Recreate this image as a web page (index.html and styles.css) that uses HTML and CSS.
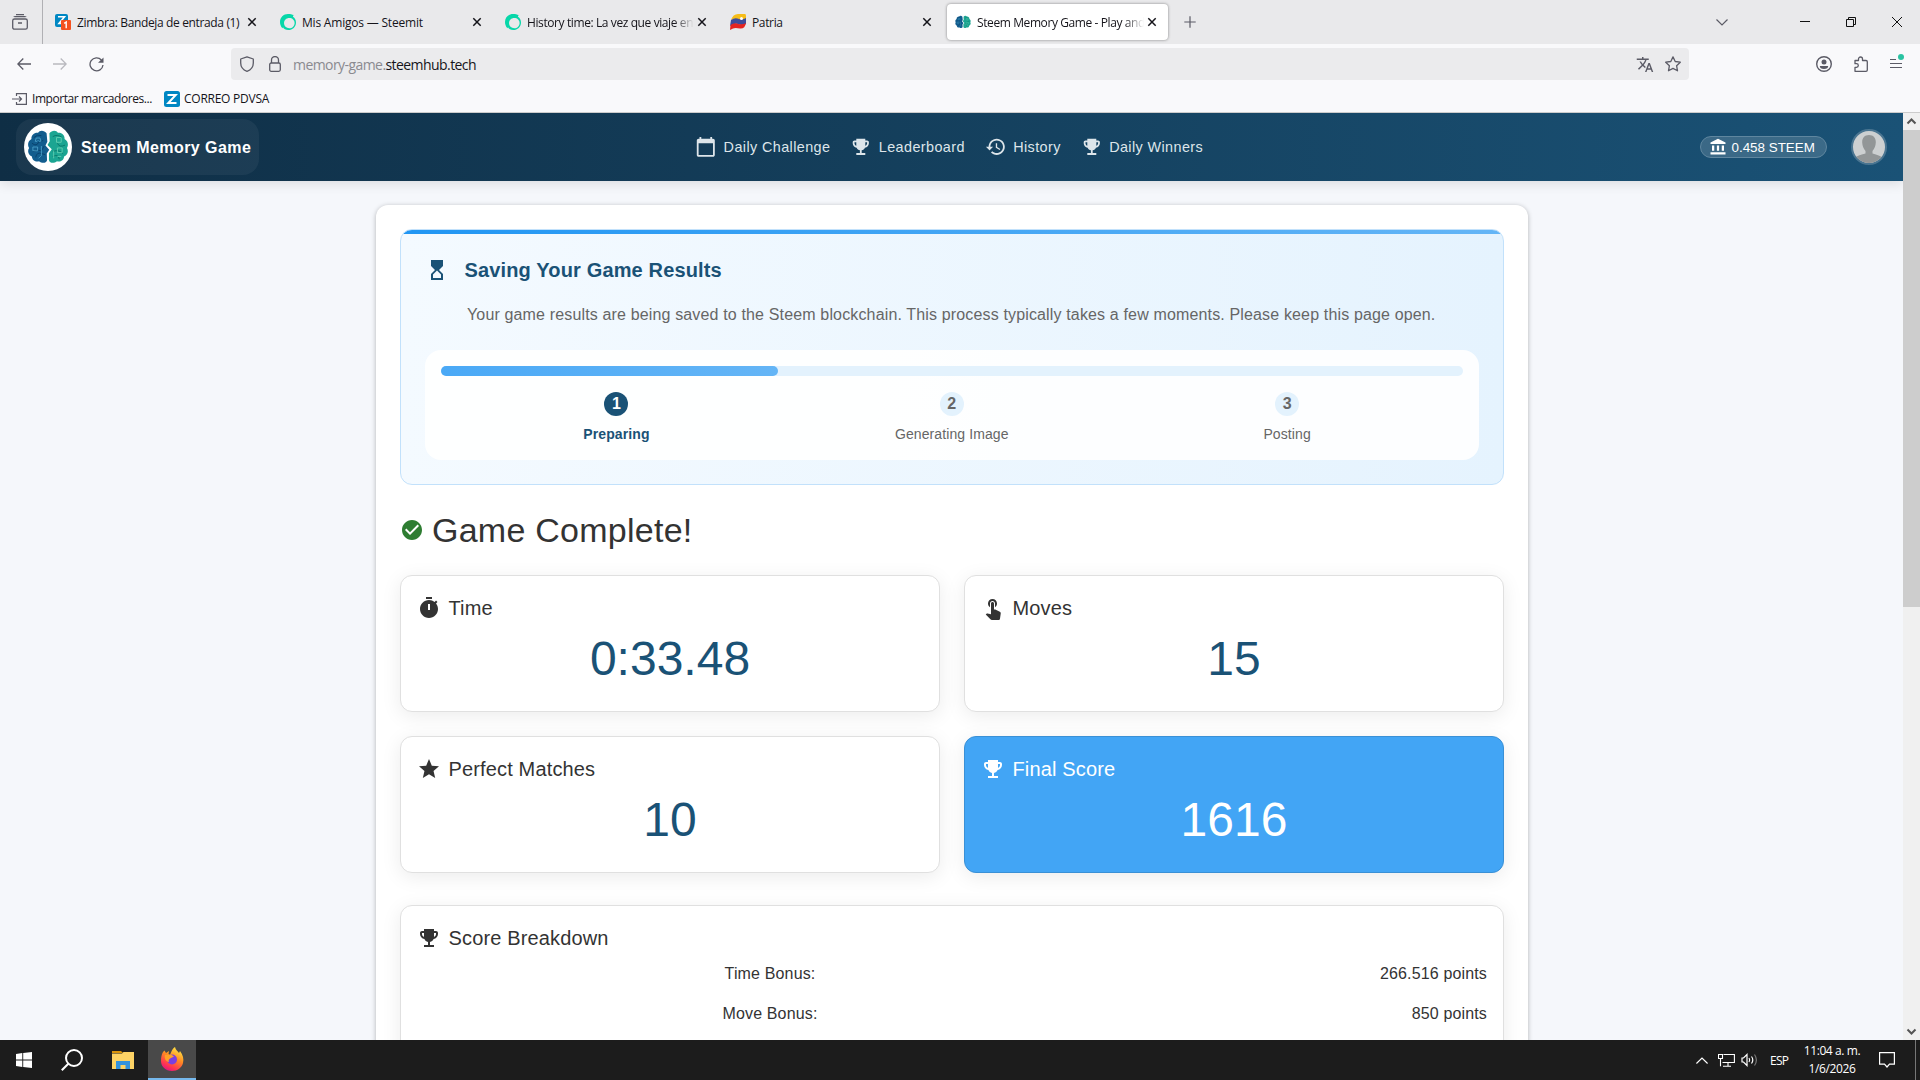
FILE: index.html
```html
<!DOCTYPE html>
<html lang="es">
<head>
<meta charset="utf-8">
<title>Steem Memory Game</title>
<link rel="stylesheet" href="styles.css">
</head>
<body>
<svg class="defs" aria-hidden="true">
  <symbol id="x" viewBox="0 0 16 16"><path d="M4.3 4.3l7.4 7.4M11.7 4.3l-7.4 7.4" fill="none" stroke="currentColor" stroke-width="1.5"/></symbol>
  <symbol id="trophy" viewBox="0 0 24 24"><path d="M19 5h-2V3H7v2H5c-1.1 0-2 .9-2 2v1c0 2.55 1.92 4.63 4.39 4.94.63 1.5 1.98 2.63 3.61 2.96V19H7v2h10v-2h-4v-3.1c1.63-.33 2.98-1.46 3.61-2.96C19.08 12.63 21 10.55 21 8V7c0-1.1-.9-2-2-2zM5 8V7h2v3.82C5.84 10.4 5 9.3 5 8zm14 0c0 1.3-.84 2.4-2 2.82V7h2v1z"/></symbol>
  <symbol id="steem" viewBox="0 0 16 16"><path fill="#07d7a9" d="M8 0C10.500 0 12 .4 13.600 1.100L12.900 2.700C15 4 16 6 16 8.400 16 12.700 12.600 16 8.300 16 5.600 16 3.900 15 3 13.300L2.500 14.300C.8 12.500 0 10.400 0 8 0 3.500 3.500 0 8 0z"/><path fill="#e9e9eb" d="M9.300 3.900c3 0 5.300 2.100 5.300 5s-2.300 5.300-5.300 5.300-5.300-2.300-5.300-5.200 2.200-5.100 5.300-5.100z"/></symbol>
  <symbol id="brain" viewBox="0 0 44 36">
    <path fill="#125d8e" d="M20.500 3.500C18 0 13 0 11.500 3 7 2.500 4 6 4.500 9.500 0 12 .5 17 2 19-.5 23 2 27 5 28c0 4 4 6 7.500 5 3 2.500 7.500 2.500 8.500-1l-.3-7 2.600-4-4-4.500 2-4z"/>
    <path fill="#1ba592" d="M23.500 3.500C26 0 31 0 32.500 3 37 2.500 40 6 39.500 9.500 44 12 43.500 17 42 19c2.500 4 0 8-3 9 0 4-4 6-7.500 5-3 2.500-7.500 2.500-8.500-1V24.500l3-4-4.500-4.500 2.300-4z"/>
    <g fill="none" stroke="#073f68" stroke-width=".9"><path d="M7 8q4-4 8-2M5 14q5 4 7-1l5-2M6 23q5-3 9-1l3-5M9 29q1-6 6-4l4 1"/></g>
    <g fill="none" stroke="#087164" stroke-width=".9"><path d="M37 8q-5-4-10-1M40 16q-6 3-8-2M38 25q-5-5-11-2M34 31q-1-6-7-3"/></g>
    <g fill="none" stroke="#4ba3ca" stroke-width=".9"><path d="M8.500 12l1-3.500h4l1 3.500h-2l-1-1-1 1zM6 18h5v4H6zM15 17v10l-3 3"/></g>
    <g fill="none" stroke="#66d1b2" stroke-width=".9"><path d="M31 8h5v5h-5zM32 19h5v5h-5zM28 22v8M32 28h4"/></g>
  </symbol>
</svg>

<div class="tabs">
  <div class="firefox-view"><svg width="16" height="16" viewBox="0 0 16 16" fill="none" stroke="#5b5b66" stroke-width="1.300"><rect x=".7" y="5" width="14.600" height="10.200" rx="1.800"/><path d="M2 2.700Q2 2.600 3 2.600h10q1 0 1 .1M4 .6h8M6 9h4"/></svg></div>
  <div class="tab"><svg width="16" height="16" viewBox="0 0 16 16"><rect width="13" height="13" rx="2" fill="#0087c3"/><path d="M3 2.800h6.500L4 9.500h4" fill="none" stroke="#fff" stroke-width="1.600"/><rect x="6" y="6" width="10" height="10" rx="1" fill="#f4511e"/><path d="M9.200 9.300l2-1.300v6.200" fill="none" stroke="#fff" stroke-width="1.400"/></svg><span class="tab-title">Zimbra: Bandeja de entrada (1)</span><svg class="close"><use href="#x"/></svg></div>
  <div class="tab"><svg width="16" height="16"><use href="#steem"/></svg><span class="tab-title wide">Mis Amigos — Steemit</span><svg class="close"><use href="#x"/></svg></div>
  <div class="tab"><svg width="16" height="16"><use href="#steem"/></svg><span class="tab-title fade">History time: La vez que viaje en</span><svg class="close"><use href="#x"/></svg></div>
  <div class="tab"><svg width="16" height="16" viewBox="0 0 16 16"><path fill="#f6bd19" d="M1 6Q3 0 8 0h7q1 0 1 2v4Q12 8 8 6 4 4 1 6z"/><path fill="#3e4c9c" d="M1 6q4-3 8-1 4 1 7-1v6q-5 2-8 0-4-1-8 2z"/><path fill="#e52421" d="M.5 11q4-3 8-1 4 1 7.500-1-1 6-6 5.500-5-1-7 0L0 16z"/><circle cx="11.500" cy="4.500" r="1.500" fill="#fff"/></svg><span class="tab-title">Patria</span><svg class="close"><use href="#x"/></svg></div>
  <div class="tab active"><svg width="16" height="16"><use href="#brain"/></svg><span class="tab-title fade">Steem Memory Game - Play and</span><svg class="close"><use href="#x"/></svg></div>
  <svg class="plus" width="12" height="12" viewBox="0 0 12 12" stroke="#5b5b66" stroke-width="1.200"><path d="M6 .3v11.400M.3 6h11.400"/></svg>
  <div class="window-controls">
    <svg width="12" height="7" viewBox="0 0 12 7" fill="none" stroke="#5b5b66" stroke-width="1.200"><path d="M.5.500L6 6l5.500-5.500"/></svg>
    <svg width="10" height="10" viewBox="0 0 10 10"><path d="M0 4.500h10" stroke="#111"/></svg>
    <svg width="10" height="10" viewBox="0 0 10 10" fill="none" stroke="#111"><path d="M.5 2.500h7v7h-7zM2.500 2.500v-2h7v7h-2"/></svg>
    <svg width="10" height="10" viewBox="0 0 10 10" stroke="#111"><path d="M0 0l10 10M10 0L0 10"/></svg>
  </div>
</div>

<div class="toolbar">
  <div class="nav-buttons">
    <svg width="14" height="12" viewBox="0 0 14 12" fill="none" stroke="#5b5b66" stroke-width="1.300"><path d="M14 6H1M6.300.500L.8 6l5.500 5.500"/></svg>
    <svg width="14" height="12" viewBox="0 0 14 12" fill="none" stroke="#b9b9bf" stroke-width="1.300"><path d="M0 6h13M7.700.500L13.200 6l-5.500 5.500"/></svg>
    <svg width="15" height="15" viewBox="0 0 15 15"><path d="M12.400 3A6.500 6.500 0 1 0 14 8" fill="none" stroke="#5b5b66" stroke-width="1.300"/><path d="M14.500.500v5.300H9z" fill="#5b5b66"/></svg>
  </div>
  <div class="urlbar">
    <svg width="16" height="16" viewBox="0 0 16 16" fill="none" stroke="#5b5b66" stroke-width="1.300"><path d="M8 .8L14.300 3v4c0 4-2.800 7-6.300 8.300C4.500 14 1.700 11 1.700 7V3z" stroke-linejoin="round"/></svg>
    <svg class="lock" width="12" height="16" viewBox="0 0 12 16" fill="none" stroke="#5b5b66" stroke-width="1.300"><rect x=".7" y="7" width="10.600" height="8.300" rx="1.500"/><path d="M2.500 7V4a3.500 3.500 0 0 1 7 0v3"/></svg>
    <span class="url">memory-game.<b>steemhub.tech</b></span>
    <svg class="translate" width="18" height="17" viewBox="0 1 24 22" fill="#5b5b66"><path d="m12.870 15.070-2.540-2.510.03-.03c1.740-1.940 2.980-4.170 3.710-6.530H17V4h-7V2H8v2H1v1.990h11.170C11.500 7.920 10.440 9.750 9 11.350 8.070 10.320 7.300 9.190 6.690 8h-2c.73 1.630 1.730 3.170 2.980 4.560l-5.090 5.020L4 19l5-5 3.110 3.110.76-2.040zM18.500 10h-2L12 22h2l1.120-3h4.750L21 22h2l-4.500-12zm-2.620 7 1.620-4.330L19.120 17h-3.240z"/></svg>
    <svg width="16" height="16" viewBox="0 0 16 16" fill="none" stroke="#5b5b66" stroke-width="1.300" stroke-linejoin="round"><path d="M8 .9l2.200 4.600 5.100.7-3.700 3.500.9 5.100L8 12.400l-4.500 2.400.9-5.100L.7 6.200l5.100-.7z"/></svg>
  </div>
  <div class="toolbar-end">
    <svg width="16" height="16" viewBox="0 0 16 16"><circle cx="8" cy="8" r="7.300" fill="none" stroke="#5b5b66" stroke-width="1.400"/><circle cx="8" cy="6" r="2.500" fill="#5b5b66"/><path d="M3.800 10h8.400q0 3-4.200 3t-4.200-3z" fill="#5b5b66"/></svg>
    <svg width="14" height="16" viewBox="0 0 14 16" fill="none" stroke="#5b5b66" stroke-width="1.300" stroke-linejoin="round"><path d="M1 4.500h3.500V3a2 2 0 0 1 4 0v1.500H12q1.300 0 1.300 1.200V14q0 1.300-1.300 1.300H1v-4h1.500a1.700 1.700 0 0 0 0-3.600H1z"/></svg>
    <svg width="14" height="20" viewBox="0 0 14 20"><path d="M0 5.500h6M0 9.500h12M0 13.500h12" stroke="#5b5b66" stroke-width="1.200"/><circle cx="11" cy="3" r="3" fill="#2ac3a2"/></svg>
  </div>
</div>

<div class="bookmarks">
  <svg width="15" height="12" viewBox="0 0 15 12" fill="none" stroke="#5b5b66" stroke-width="1.200"><path d="M4.500 3V.6h9.900v10.800H4.500V9M0 6h9M7 3.500L9.500 6 7 8.500"/></svg>
  <span class="bm1">Importar marcadores...</span>
  <svg class="bm-icon" width="16" height="16" viewBox="0 0 16 16"><rect width="16" height="16" rx="2.500" fill="#0087c3"/><path d="M3.500 4h8.200L4.300 12h8.200" fill="none" stroke="#fff" stroke-width="2"/></svg>
  <span class="bm2">CORREO PDVSA</span>
</div>

<div class="viewport">
  <div class="page">
    <header class="site-header">
      <div class="brand"><span class="brand-logo"><svg width="42" height="34"><use href="#brain"/></svg></span><span class="brand-name">Steem Memory Game</span></div>
      <nav class="site-nav">
        <a><svg viewBox="0 0 24 24"><path d="M20 3h-1V1h-2v2H7V1H5v2H4c-1.100 0-2 .9-2 2v16c0 1.100.9 2 2 2h16c1.100 0 2-.9 2-2V5c0-1.100-.9-2-2-2zm0 18H4V8h16v13z"/></svg><span>Daily Challenge</span></a>
        <a><svg><use href="#trophy"/></svg><span>Leaderboard</span></a>
        <a><svg viewBox="0 0 24 24"><path d="M13 3c-4.970 0-9 4.030-9 9H1l3.890 3.890.07.14L9 12H6c0-3.870 3.130-7 7-7s7 3.130 7 7-3.130 7-7 7c-1.930 0-3.680-.79-4.940-2.060l-1.420 1.420C8.270 19.990 10.510 21 13 21c4.970 0 9-4.030 9-9s-4.030-9-9-9zm-1 5v5l4.280 2.540.72-1.210-3.500-2.080V8H12z"/></svg><span>History</span></a>
        <a><svg><use href="#trophy"/></svg><span>Daily Winners</span></a>
      </nav>
      <div class="account">
        <span class="balance"><svg width="18" height="18" viewBox="0 0 24 24" fill="#fff"><path d="M4 10h3v7H4zM10.500 10h3v7h-3zM2 19h20v3H2zM17 10h3v7h-3zM12 1 2 6v2h20V6z"/></svg>0.458 STEEM</span>
        <svg class="avatar" width="36" height="36" viewBox="0 0 36 36"><defs><clipPath id="av"><circle cx="18" cy="18" r="16"/></clipPath></defs><circle cx="18" cy="18" r="17" fill="#cdd0d1" stroke="#4a7591" stroke-width="2"/><g clip-path="url(#av)" fill="#929697"><path d="M18 6c4.500 0 7 3 6.800 7.500-.1 3.500-1.500 6.500-3.300 8.500v2.500c3 1 8 2 11 5V36H3v-6.500c3-3 8-4 11.500-5V22c-1.800-2-3.200-5-3.300-8.500C11 9 13.500 6 18 6z"/></g></svg>
      </div>
    </header>

    <main class="panel">
      <section class="saving">
        <div class="saving-title"><svg width="24" height="24" viewBox="0 0 24 24" fill="#1a5276"><path d="m6 2 .01 6L10 12l-3.990 4.010L6 22h12v-6l-4-4 4-3.990V2H6zm10 14.500V20H8v-3.500l4-4 4 4z"/></svg><h2>Saving Your Game Results</h2></div>
        <p class="saving-text">Your game results are being saved to the Steem blockchain. This process typically takes a few moments. Please keep this page open.</p>
        <div class="progress-box">
          <div class="progress"><div class="progress-fill" style="width:33%"></div></div>
          <div class="steps">
            <div class="step current"><b>1</b><span>Preparing</span></div>
            <div class="step"><b>2</b><span>Generating Image</span></div>
            <div class="step"><b>3</b><span>Posting</span></div>
          </div>
        </div>
      </section>

      <h1 class="complete"><svg width="24" height="24" viewBox="0 0 24 24" fill="#2e7d32"><path d="M12 2C6.480 2 2 6.480 2 12s4.480 10 10 10 10-4.480 10-10S17.520 2 12 2zm-2 15-5-5 1.410-1.410L10 14.170l7.590-7.590L19 8l-9 9z"/></svg>Game Complete!</h1>

      <div class="stats">
        <div class="card"><h3><svg viewBox="0 0 24 24"><path d="M9 1h6v2H9zm10.030 6.390 1.420-1.420c-.43-.51-.9-.99-1.410-1.410l-1.420 1.420C16.070 4.740 14.120 4 12 4c-4.970 0-9 4.030-9 9s4.020 9 9 9 9-4.030 9-9c0-2.120-.74-4.070-1.970-5.610zM13 14h-2V8h2v6z"/></svg>Time</h3><div class="value">0:33.48</div></div>
        <div class="card"><h3><svg viewBox="0 0 24 24"><path d="M9 11.240V7.500C9 6.120 10.120 5 11.500 5S14 6.120 14 7.500v3.740c1.210-.81 2-2.180 2-3.740C16 5.010 13.990 3 11.500 3S7 5.010 7 7.500c0 1.560.79 2.930 2 3.740zm9.840 4.630-4.540-2.260c-.17-.07-.35-.11-.54-.11H13v-6c0-.83-.67-1.500-1.500-1.500S10 6.670 10 7.500v10.740c-3.600-.76-3.540-.75-3.670-.75-.31 0-.59.13-.79.33l-.79.8 4.940 4.940c.27.27.65.44 1.060.44h6.790c.75 0 1.330-.55 1.440-1.280l.75-5.270c.01-.07.02-.14.02-.2 0-.62-.38-1.160-.91-1.380z"/></svg>Moves</h3><div class="value">15</div></div>
        <div class="card"><h3><svg viewBox="0 0 24 24"><path d="M12 17.270 18.180 21l-1.640-7.030L22 9.240l-7.190-.61L12 2 9.190 8.630 2 9.240l5.460 4.730L5.820 21z"/></svg>Perfect Matches</h3><div class="value">10</div></div>
        <div class="card final"><h3><svg><use href="#trophy"/></svg>Final Score</h3><div class="value">1616</div></div>
      </div>

      <section class="card breakdown">
        <h3><svg><use href="#trophy"/></svg>Score Breakdown</h3>
        <div class="row"><span>Time Bonus:</span><span>266.516 points</span></div>
        <div class="row"><span>Move Bonus:</span><span>850 points</span></div>
      </section>
    </main>
  </div>
  <div class="scrollbar">
    <svg width="17" height="17" viewBox="0 0 17 17" fill="none" stroke="#555" stroke-width="2"><path d="M4.500 10.500l4-4 4 4"/></svg>
    <div class="thumb"></div>
    <svg class="down" width="17" height="17" viewBox="0 0 17 17" fill="none" stroke="#555" stroke-width="2"><path d="M4.500 6.500l4 4 4-4"/></svg>
  </div>
</div>

<div class="taskbar">
  <div class="task"><svg width="16" height="16" viewBox="0 0 16 16" fill="#fff"><path d="M0 2l6.300-.9v6.400H0zM7.200 1L16 0v7.500H7.200zM0 8.400h6.300v6.500L0 14zM7.200 8.400H16V16l-8.800-1.100z"/></svg></div>
  <div class="task"><svg width="22" height="22" viewBox="0 0 22 22" fill="none" stroke="#fff" stroke-width="2"><circle cx="13" cy="9" r="8"/><path d="M7.300 14.700L.8 21.200"/></svg></div>
  <div class="task"><svg width="22" height="18" viewBox="0 0 22 18"><path d="M0 0h9l2 2H0z" fill="#d9930b"/><path d="M0 2.500h10L11.500 1H22v17H0z" fill="#fdd365"/><path d="M4 18v-8h14v8h-4.500v-4h-5v4z" fill="#3393dd"/></svg></div>
  <div class="task open"><svg width="24" height="24" viewBox="0 0 24 24"><defs><linearGradient id="ff" x1=".8" y1="0" x2=".3" y2="1"><stop offset="0" stop-color="#fff04a"/><stop offset=".45" stop-color="#ff8b22"/><stop offset=".8" stop-color="#ff3650"/><stop offset="1" stop-color="#e01581"/></linearGradient></defs><path fill="url(#ff)" d="M3 5l1.500-1.500L6 6l3-2-.5 3L10 8c2-5 3-7 5-8 .5 3 3 4 4 6l1-2c3 4 4 8 3 12-1.200 4.500-5.500 8-11 8C5.500 24 1 19.500 1 14c0-4 .5-6 2-9z"/><circle cx="12" cy="12.500" r="5" fill="#7a3fe0"/><path fill="#ffa126" d="M5 8l6-.5 3 2-3 1.500c-2 1.200-3 2-2 4-3 0-5-4-4-7z"/></svg></div>
  <div class="tray">
    <svg width="12" height="7" viewBox="0 0 12 7" fill="none" stroke="#fff" stroke-width="1.200"><path d="M.4 6.500L6 1l5.600 5.500"/></svg>
    <svg class="net" width="17" height="14" viewBox="0 0 17 14" fill="none" stroke="#fff" stroke-width="1.100"><path d="M5.500 1.500h10.900v8H4.500M10 9.500v3.500M5 13.200h8M.5 1.500h4v4h-4zM2.500 5.500v7.700"/></svg>
    <svg class="vol" width="17" height="14" viewBox="0 0 17 14" fill="none" stroke="#fff" stroke-width="1.200"><path d="M1 5h1.500L6 1.500v11L2.500 9H1zM8 5q1.400 2 0 4M10.500 3.500q2.600 3.500 0 7"/><path d="M13.500 1.500q3.800 5.500 0 11" stroke="#777"/></svg>
    <span class="lang">ESP</span>
    <div class="clock"><span>11:04 a. m.</span><span>1/6/2026</span></div>
    <svg class="note" width="16" height="16" viewBox="0 0 16 16" fill="none" stroke="#fff" stroke-width="1.200"><path d="M.6.600h14.800v11.500H10.500L8 15l-2.500-2.900H.6z"/></svg>
    <i class="desk"></i>
  </div>
</div>
</body>
</html>
```
FILE: styles.css
```css
* { box-sizing: border-box; }
body { margin: 0; width: 1920px; height: 1080px; overflow: hidden; display: flex; flex-direction: column; background: #f9f9fb; font-family: "Liberation Sans", Arial, sans-serif; color: #333; }
svg { display: block; flex: none; }
h1, h2, h3, p { margin: 0; font-weight: 400; }
.defs { width: 0; height: 0; position: absolute; }

.tabs, .toolbar, .bookmarks, .taskbar { font-family: "Open Sans", "Noto Sans", sans-serif; flex: none; display: flex; align-items: center; white-space: nowrap; }
.tabs { height: 44px; background: #e9e9eb; font-size: 12px; color: #15141a; }
.firefox-view { width: 43px; height: 44px; padding: 0 14px 0 12px; display: flex; align-items: center; border-right: 1px solid #b0b0b4; margin-right: 4px; }
.tab { width: 221px; height: 36px; margin-right: 4px; padding: 0 8px; display: flex; align-items: center; border-radius: 4px; }
.tab.active { background: #fff; box-shadow: 0 0 3px rgba(0,0,0,.45); }
.tab-title { flex: 1; min-width: 0; margin: 0 0 0 6px; overflow: hidden; letter-spacing: -.36px; }
.tab-title.wide { letter-spacing: -.2px; }
.tab-title.fade { letter-spacing: -.4px; -webkit-mask-image: linear-gradient(to right, #000 88%, transparent); mask-image: linear-gradient(to right, #000 88%, transparent); }
.close { width: 16px; height: 16px; }
.plus { margin-left: 12px; }
.window-controls { margin-left: auto; display: flex; align-items: center; padding-right: 18px; }
.window-controls svg { margin-left: 36px; }
.window-controls svg:nth-child(2) { margin-left: 72px; }

.toolbar { height: 40px; }
.nav-buttons { width: 231px; padding-left: 17px; display: flex; gap: 22px; align-items: center; }
.urlbar { width: 1458px; height: 32px; display: flex; align-items: center; padding: 0 8px; border-radius: 4px; background: #ebebed; }
.lock { margin-left: 14px; }
.url { flex: 1; margin: 1px 0 0 12px; font-size: 14px; letter-spacing: -.57px; color: #8a8a90; }
.url b { font-weight: 400; color: #15141a; }
.translate { margin-right: 11px; }
.toolbar-end { margin-left: auto; padding-right: 16px; display: flex; gap: 22px; align-items: center; }
.bookmarks { height: 29px; padding: 1px 0 0 12px; font-size: 12px; color: #15141a; border-bottom: 1px solid #ccc; }
.bm1 { width: 121px; margin-left: 5px; letter-spacing: -.43px; }
.bm-icon { margin: 0 4px 0 11px; }
.bm2 { letter-spacing: -.25px; }

.viewport { height: 927px; flex: none; display: flex; overflow: hidden; }
.page { width: 1903px; height: 927px; overflow: hidden; background: #f5f7fb; }
.site-header { height: 68px; padding: 0 16px; display: grid; grid-template-columns: 679px 1fr auto; align-items: center; color: #fff; background: linear-gradient(90deg, #0f2e45, #1a5276); box-shadow: 0 2px 12px rgba(0,0,0,.12); }
.brand { width: 243px; height: 56px; padding: 0 8px; display: flex; align-items: center; gap: 9px; border-radius: 16px; background: rgba(255,255,255,.05); }
.brand-logo { flex: none; width: 48px; height: 48px; display: grid; place-items: center; border-radius: 50%; background: #fff; }
.brand-name { padding-top: 2px; font-size: 16px; font-weight: 700; letter-spacing: .45px; white-space: nowrap; }
.site-nav { display: flex; gap: 19.800px; font-size: 14.400px; letter-spacing: .4px; color: #dde5ea; }
.site-nav a { display: flex; align-items: center; gap: 7px; white-space: nowrap; }
.site-nav svg { width: 21.600px; height: 21.600px; fill: #dde5ea; }
.account { display: flex; align-items: center; gap: 24px; }
.balance { width: 127px; height: 22px; padding-left: 8px; display: flex; align-items: center; gap: 4.500px; font-size: 13.400px; white-space: nowrap; border: 1px solid #5f869f; border-radius: 11px; background: rgba(255,255,255,.15); }

.panel { width: 1152px; height: 1100px; margin: 24px 0 0 376px; padding: 24px; border-radius: 12px; background: #fff; box-shadow: 0 1px 5px rgba(0,0,0,.28); }
.saving { height: 256px; padding: 24px; border: 1px solid #c2e1fb; border-radius: 12px; background: linear-gradient(90deg, #2196f3, #64b5f6) top / 100% 4px no-repeat, linear-gradient(90deg, #f4faff, #e5f3fe); background-origin: padding-box; }
.saving-title { height: 32px; display: flex; align-items: center; gap: 15.500px; color: #1a5276; }
.saving-title h2 { font-size: 20px; font-weight: 700; letter-spacing: .15px; }
.saving-text { height: 24px; margin: 17px 0 23px 42px; font-size: 16px; line-height: 24px; letter-spacing: .15px; color: #666; white-space: nowrap; }
.progress-box { height: 110px; padding: 16px; border-radius: 16px; background: rgba(255,255,255,.9); }
.progress { height: 10px; border-radius: 5px; background: #e3f2fd; }
.progress-fill { height: 10px; border-radius: 5px; background: linear-gradient(90deg, #4aa9f6, #64b5f6); }
.steps { display: grid; grid-template-columns: repeat(3, 1fr); padding: 16px 8.200px 0 7.800px; }
.step { display: flex; flex-direction: column; align-items: center; gap: 8px; font-size: 14px; line-height: 20px; letter-spacing: .1px; color: #666; }
.step b { width: 24px; height: 24px; border-radius: 50%; background: #e3f2fd; font-size: 16px; line-height: 24px; text-align: center; }
.step.current { color: #1a5276; font-weight: 700; }
.step.current b { color: #fff; background: #1a5276; }

.complete { height: 42px; margin: 24px 0; display: flex; align-items: center; gap: 8px; font-size: 34px; line-height: 42px; letter-spacing: .25px; }
.stats { display: grid; grid-template-columns: 1fr 1fr; gap: 24px; margin-bottom: 32px; }
.card { height: 137px; padding: 16px; border: 1px solid #e0e0e0; border-radius: 12px; background: #fff; box-shadow: 0 4px 20px rgba(0,0,0,.08); }
.card h3 { height: 32px; display: flex; align-items: center; gap: 7.500px; font-size: 20px; letter-spacing: .15px; }
.card h3 svg { width: 24px; height: 24px; fill: currentColor; }
.value { margin-top: 7px; text-align: center; font-size: 48px; line-height: 56px; color: #1a5276; }
.card.final { color: #fff; background: #42a5f5; border-color: #3a90d6; }
.final .value { color: #fff; }
.card.breakdown { height: 300px; }
.row { height: 40px; display: grid; grid-template-columns: 706px 1fr; align-items: center; font-size: 16px; letter-spacing: .15px; text-align: center; }
.row span + span { text-align: right; }

.scrollbar { width: 17px; background: #f0f0f0; display: flex; flex-direction: column; }
.thumb { height: 477px; background: #cdcdcd; }
.down { margin-top: auto; }

.taskbar { height: 40px; background: #1c1c1c; color: #fff; font-size: 12px; }
.task { width: 48px; height: 40px; display: grid; place-items: center; }
.task:first-child { width: 40px; padding-left: 8px; }
.task:nth-child(2) { width: 64px; }
.task:nth-child(3) { width: 44px; padding-right: 6px; }
.task.open { background: #494949; border-bottom: 2px solid #76b9ed; }
.tray { margin-left: auto; height: 40px; display: flex; align-items: center; }
.net { margin-left: 10px; }
.vol { margin-left: 6px; }
.lang { margin-left: 12px; width: 19px; letter-spacing: -.7px; }
.clock { margin-left: 8px; width: 70px; display: flex; flex-direction: column; text-align: center; line-height: 18px; letter-spacing: -.4px; }
.note { margin-left: 12px; }
.desk { width: 1px; height: 40px; margin: 0 4px 0 20px; background: #777; }
```
